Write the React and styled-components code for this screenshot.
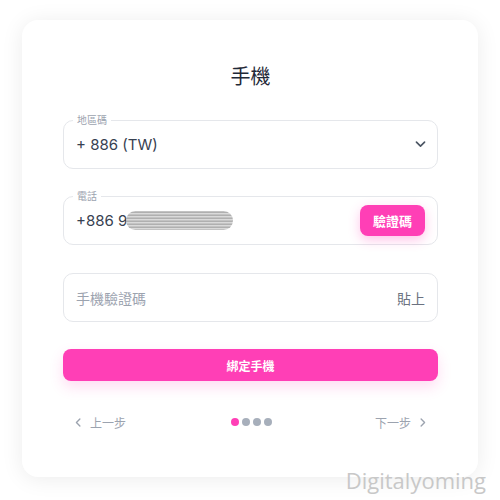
import styled, { createGlobalStyle } from "styled-components";

const GlobalStyle = createGlobalStyle`
  html, body {
    margin: 0;
    padding: 0;
    background: #ffffff;
  }
  body {
    font-family: Inter, "Noto Sans CJK TC", "Noto Sans", sans-serif;
  }
`;

const PINK = "#ff3fb6";

const Page = styled.div`
  position: relative;
  width: 500px;
  height: 500px;
  padding: 20px 22px 0;
  box-sizing: border-box;
  overflow: hidden;
`;

const Card = styled.div`
  width: 456px;
  height: 457px;
  box-sizing: border-box;
  background: #fff;
  border-radius: 16px;
  box-shadow: 0 2px 22px rgba(0, 0, 0, 0.08);
  padding: 43px 40px 0 41px;
  display: flex;
  flex-direction: column;
`;

const Title = styled.h1`
  margin: 0 0 29px;
  font-size: 20px;
  line-height: 28px;
  font-weight: 400;
  color: #1f2937;
  text-align: center;
`;

const Field = styled.div`
  position: relative;
  height: 49px;
  box-sizing: border-box;
  border: 1px solid #e5e7eb;
  border-radius: 10px;
  padding: 0 10px 0 12px;
  display: flex;
  align-items: center;
  justify-content: space-between;
  margin-bottom: ${(p) => p.$gap || 27}px;
`;

const FloatLabel = styled.span`
  position: absolute;
  top: -7px;
  left: 9px;
  padding: 0 4px;
  background: #fff;
  font-size: 10px;
  line-height: 12px;
  color: #9ca3af;
`;

const Value = styled.span`
  font-size: 15px;
  color: #374151;
  display: flex;
  align-items: center;
`;

const Placeholder = styled.span`
  font-size: 14px;
  color: #9ca3af;
`;

const Paste = styled.span`
  font-size: 14px;
  color: #6b7280;
  margin-right: 2px;
`;

const Blur = styled.span`
  display: inline-block;
  width: 107px;
  height: 19px;
  margin-left: -1px;
  border-radius: 10px;
  background:
    repeating-linear-gradient(0deg, #bdbdbd 0 1px, #d6d6d6 1px 2px, #a8a8a8 2px 3px),
    #c4c4c4;
  opacity: 0.9;
`;

const SmallButton = styled.button`
  width: 65px;
  height: 31px;
  border: none;
  border-radius: 8px;
  background: ${PINK};
  color: #fff;
  font-family: inherit;
  font-size: 13px;
  font-weight: 700;
  box-shadow: 0 4px 12px rgba(255, 63, 182, 0.3);
  margin-right: 2px;
`;

const MainButton = styled.button`
  height: 32px;
  border: none;
  border-radius: 8px;
  background: ${PINK};
  color: #fff;
  font-family: inherit;
  font-size: 12px;
  font-weight: 700;
  box-shadow: 0 6px 14px rgba(255, 63, 182, 0.18);
  margin-bottom: 29px;
`;

const Nav = styled.div`
  display: flex;
  align-items: center;
  justify-content: space-between;
  padding: 0 10px;
  height: 24px;
`;

const NavLink = styled.span`
  display: flex;
  align-items: center;
  gap: 6px;
  font-size: 12px;
  color: #9ca3af;
`;

const Dots = styled.div`
  display: flex;
  gap: 3px;
  margin-left: 1px;
`;

const Dot = styled.span`
  width: 8px;
  height: 8px;
  border-radius: 50%;
  background: ${(p) => (p.$active ? PINK : "#a7afbb")};
`;

const Watermark = styled.div`
  position: absolute;
  right: 14px;
  bottom: 5px;
  font-family: "Open Sans", "DejaVu Sans", sans-serif;
  font-size: 22px;
  color: #c8c8c8;
`;

function Chevron({ dir = "down", color = "#4b5563", size = 12 }) {
  const paths = {
    down: "M3 5l5 5 5-5",
    left: "M10 3L5 8l5 5",
    right: "M6 3l5 5-5 5",
  };
  return (
    <svg width={size} height={size} viewBox="0 0 16 16" fill="none">
      <path d={paths[dir]} stroke={color} strokeWidth="2" strokeLinecap="round" strokeLinejoin="round" />
    </svg>
  );
}

export default function App() {
  return (
    <Page>
      <GlobalStyle />
      <Card>
        <Title>手機</Title>

        <Field>
          <FloatLabel>地區碼</FloatLabel>
          <Value>+ 886 (TW)</Value>
          <Chevron dir="down" size={13} />
        </Field>

        <Field $gap={28}>
          <FloatLabel>電話</FloatLabel>
          <Value>
            +886 9<Blur />
          </Value>
          <SmallButton>驗證碼</SmallButton>
        </Field>

        <Field>
          <Placeholder>手機驗證碼</Placeholder>
          <Paste>貼上</Paste>
        </Field>

        <MainButton>綁定手機</MainButton>

        <Nav>
          <NavLink>
            <Chevron dir="left" color="#9ca3af" size={11} />
            上一步
          </NavLink>
          <Dots>
            <Dot $active />
            <Dot />
            <Dot />
            <Dot />
          </Dots>
          <NavLink>
            下一步
            <Chevron dir="right" color="#9ca3af" size={11} />
          </NavLink>
        </Nav>
      </Card>
      <Watermark>Digitalyoming</Watermark>
    </Page>
  );
}
